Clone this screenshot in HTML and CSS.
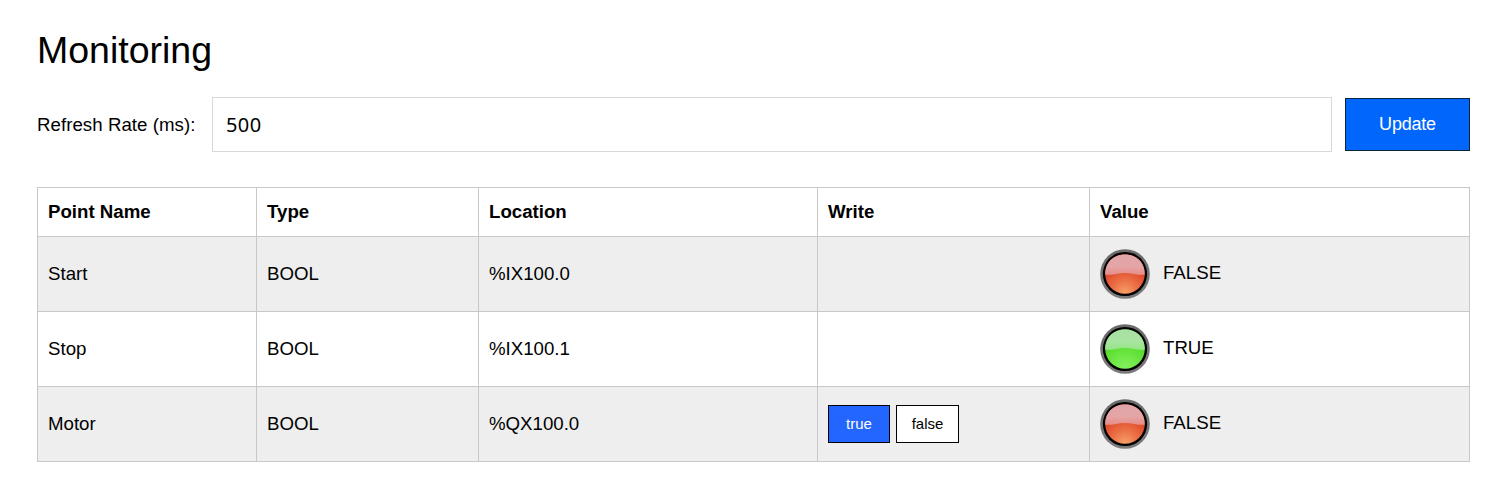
FILE: index.html
```html
<!DOCTYPE html>
<html lang="en">
<head>
<meta charset="utf-8">
<title>Monitoring</title>
<link rel="stylesheet" href="styles.css">
</head>
<body>
<svg class="defs" width="0" height="0" aria-hidden="true">
  <defs>
    <linearGradient id="ring" x1="0" y1="0" x2="0" y2="1">
      <stop offset="0" stop-color="#6a6a6a"/><stop offset="1" stop-color="#7c7c7c"/>
    </linearGradient>
    <radialGradient id="red" cx=".5" cy=".98" r=".62">
      <stop offset="0" stop-color="#f6a268"/><stop offset=".5" stop-color="#ec7248"/><stop offset="1" stop-color="#e04d2c"/>
    </radialGradient>
    <linearGradient id="redGloss" x1="0" y1="0" x2="0" y2="1">
      <stop offset="0" stop-color="#dfa5a9"/><stop offset=".6" stop-color="#e5a5a6"/><stop offset="1" stop-color="#e68d88"/>
    </linearGradient>
    <radialGradient id="green" cx=".5" cy=".98" r=".62">
      <stop offset="0" stop-color="#83f35c"/><stop offset=".5" stop-color="#70e846"/><stop offset="1" stop-color="#58dc2e"/>
    </radialGradient>
    <linearGradient id="greenGloss" x1="0" y1="0" x2="0" y2="1">
      <stop offset="0" stop-color="#a9dfa4"/><stop offset=".6" stop-color="#a8e5a2"/><stop offset="1" stop-color="#95e585"/>
    </linearGradient>
    <symbol id="led" viewBox="0 0 50 50">
      <circle cx="25" cy="25" r="24.8" fill="url(#ring)"/>
      <circle cx="25" cy="25" r="22.1" fill="#000"/>
    </symbol>
    <path id="gloss" d="M5.300 25.800C4.700 13.500 13.300 5.400 25 5.400S45.300 13.500 44.700 25.800Q40 26.100 34 24.900Q25 23.200 16 24.900Q10 26.100 5.300 25.800Z"/>
  </defs>
</svg>
<main class="page">
  <h1 class="title">Monitoring</h1>
  <form class="refresh">
    <label class="refresh-label" for="rate">Refresh Rate (ms):</label>
    <input class="refresh-input" id="rate" type="text" value="500">
    <button class="update" type="button">Update</button>
  </form>
  <table class="points">
    <colgroup><col class="c-name"><col class="c-type"><col class="c-location"><col class="c-write"><col class="c-value"></colgroup>
    <thead>
      <tr><th>Point Name</th><th>Type</th><th>Location</th><th>Write</th><th>Value</th></tr>
    </thead>
    <tbody>
      <tr><td>Start</td><td>BOOL</td><td>%IX100.0</td><td></td>
        <td><div class="value"><svg class="led" viewBox="0 0 50 50"><use href="#led"/><circle cx="25" cy="25" r="19.800" fill="url(#red)"/><use href="#gloss" fill="url(#redGloss)"/></svg><span class="state">FALSE</span></div></td></tr>
      <tr><td>Stop</td><td>BOOL</td><td>%IX100.1</td><td></td>
        <td><div class="value"><svg class="led" viewBox="0 0 50 50"><use href="#led"/><circle cx="25" cy="25" r="19.800" fill="url(#green)"/><use href="#gloss" fill="url(#greenGloss)"/></svg><span class="state">TRUE</span></div></td></tr>
      <tr><td>Motor</td><td>BOOL</td><td>%QX100.0</td>
        <td><div class="write"><button class="write-btn write-true" type="button">true</button><button class="write-btn write-false" type="button">false</button></div></td>
        <td><div class="value"><svg class="led" viewBox="0 0 50 50"><use href="#led"/><circle cx="25" cy="25" r="19.800" fill="url(#red)"/><use href="#gloss" fill="url(#redGloss)"/></svg><span class="state">FALSE</span></div></td></tr>
    </tbody>
  </table>
</main>
</body>
</html>
```
FILE: styles.css
```css
* { box-sizing: border-box; }
body {
  margin: 0;
  background: #fff;
  color: #000;
  font: 18.67px/22px "Liberation Sans", Arial, sans-serif;
}
.defs { display: block; height: 0; }
.page { width: 1470px; padding: 29px 0 0 37px; }
.title {
  margin: 0 0 26px;
  font-size: 37.5px;
  line-height: 42px;
  font-weight: 400;
}
.refresh { display: flex; align-items: center; height: 55px; margin: 0 0 35px; }
.refresh-label { width: 175px; letter-spacing: 0.05px; }
.refresh-input {
  width: 1120px;
  height: 55px;
  margin-right: 13px;
  padding: 0 13px;
  border: 1px solid #d8d8d8;
  border-radius: 0;
  background: #fff;
  font: 20px "Noto Sans", sans-serif;
  letter-spacing: 0.4px;
  color: #000;
}
.update {
  width: 125px;
  height: 53px;
  padding: 0;
  border: 1px solid #0b2440;
  background: #0066fc;
  color: #fff;
  font: 18px "Liberation Sans", Arial, sans-serif;
  letter-spacing: -0.2px;
}
.points {
  width: 1433px;
  table-layout: fixed;
  border-collapse: collapse;
}
.c-name { width: 219px; }
.c-type { width: 222px; }
.c-location { width: 339px; }
.c-write { width: 272px; }
.c-value { width: 380px; }
.points th, .points td {
  padding: 0 10px;
  border: 1px solid #c8c8c8;
  text-align: left;
  vertical-align: middle;
}
.points th { height: 49px; }
.points td { height: 75px; }
.points tbody tr:nth-child(odd) { background: #eee; }
.value { display: flex; align-items: center; gap: 13px; }
.led { width: 50px; height: 50px; }
.state { padding-bottom: 3px; }
.write { display: flex; gap: 6px; }
.write-btn {
  height: 38px;
  padding: 0 0 1px;
  border: 1px solid #000;
  font: 15px "Liberation Sans", Arial, sans-serif;
}
.write-true { width: 62px; background: #2266ff; color: #fff; }
.write-false { width: 63px; background: #fff; color: #000; }
```
